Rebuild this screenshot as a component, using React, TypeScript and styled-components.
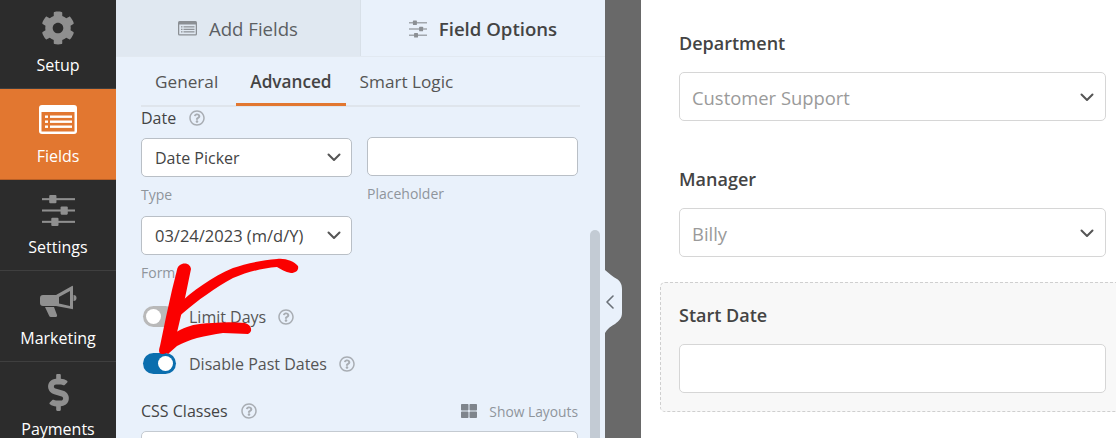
import React from 'react';
import styled, { createGlobalStyle } from 'styled-components';
import { FaCog, FaDollarSign, FaRegQuestionCircle, FaThLarge } from 'react-icons/fa';

const GlobalStyle = createGlobalStyle`
  html, body {
    margin: 0;
    padding: 0;
    background: #fff;
    overflow: hidden;
  }
  * { box-sizing: border-box; }
  body { font-family: "Open Sans", "Liberation Sans", sans-serif; }
`;

const Page = styled.div`
  position: relative;
  display: flex;
  width: 1116px;
  height: 438px;
  overflow: hidden;
`;

const Sidebar = styled.nav`
  flex: 0 0 116px;
  height: 438px;
  background: #2c2c2c;
  overflow: hidden;
`;

const SideItem = styled.div<{ $active?: boolean; $first?: boolean }>`
  height: 91px;
  margin-top: ${p => (p.$first ? '-2px' : '0')};
  display: flex;
  flex-direction: column;
  align-items: center;
  padding-top: 11px;
  background: ${p => (p.$active ? '#e27730' : 'transparent')};
  border-bottom: 1px solid ${p => (p.$active ? '#b85f26' : '#3f3f3f')};
  color: ${p => (p.$active ? '#fff' : '#8f8f8f')};
`;

const SideIcon = styled.div`
  height: 38px;
  display: flex;
  align-items: center;
  justify-content: center;
  font-size: 34px;
`;

const SideLabel = styled.span`
  margin-top: 8px;
  font-size: 16px;
  line-height: 20px;
  color: #fff;
`;

const Panel = styled.section`
  flex: 0 0 489px;
  height: 438px;
  background: #e9f1fb;
`;

const TopTabs = styled.div`
  display: flex;
  height: 57px;
  border-bottom: 1px solid #e2e9f1;
`;

const TopTab = styled.div<{ $active?: boolean }>`
  flex: 0 0 ${p => (p.$active ? '244px' : '245px')};
  display: flex;
  align-items: center;
  justify-content: center;
  gap: 12px;
  padding-top: 1px;
  font-size: 18.6px;
  font-weight: ${p => (p.$active ? 600 : 400)};
  color: ${p => (p.$active ? '#444' : '#5c5f63')};
  background: ${p => (p.$active ? '#e9f1fb' : '#e0e8f1')};
  border-right: ${p => (p.$active ? 'none' : '1px solid #d8e0e8')};
`;

const PanelBody = styled.div`
  padding: 0 25px;
`;

const SubTabs = styled.div`
  display: flex;
  height: 50px;
  border-bottom: 2px solid #dfe5ec;
`;

const SubTab = styled.div<{ $active?: boolean }>`
  height: 49px;
  padding: 2px 14px 0;
  display: flex;
  align-items: center;
  font-size: 17.2px;
  font-weight: ${p => (p.$active ? 600 : 400)};
  color: ${p => (p.$active ? '#444' : '#555')};
  border-bottom: 3px solid ${p => (p.$active ? '#e27730' : 'transparent')};
`;

const FirstSubTab = styled(SubTab)`
  padding-right: 18px;
`;

const HeadRow = styled.div`
  display: flex;
  align-items: center;
  gap: 13px;
  height: 20px;
  margin-top: 1px;
  font-size: 16px;
  color: #444;
  svg { color: #a8adb3; font-size: 16px; }
`;

const FieldRow = styled.div<{ $top: number }>`
  display: flex;
  gap: 15px;
  margin-top: ${p => p.$top}px;
`;

const FieldCol = styled.div`
  flex: 0 0 211px;
`;

const ChevronBox = styled.div`
  width: 100%;
  display: flex;
  align-items: center;
  justify-content: space-between;
  background: #fff;
  border: 1px solid #b9bfc6;
  border-radius: 5px;
`;

const PanelSelect = styled(ChevronBox)<{ $size?: number }>`
  height: 39px;
  padding: 0 10px 0 13px;
  font-size: ${p => p.$size ?? 16}px;
  color: #444;
`;

const PanelInput = styled.div`
  height: 39px;
  margin: -1px 0 1px;
  background: #fff;
  border: 1px solid #b9bfc6;
  border-radius: 5px;
`;

const Hint = styled.div`
  margin-top: 9px;
  height: 18px;
  line-height: 18px;
  font-size: 14px;
  color: #8f959b;
`;

const ToggleRow = styled.div<{ $top: number }>`
  display: flex;
  align-items: center;
  height: 21px;
  margin-top: ${p => p.$top}px;
  padding-left: 2px;
  font-size: 16px;
  color: #555;
  svg { color: #a8adb3; font-size: 16px; margin-left: 12px; }
`;

const Toggle = styled.span<{ $on?: boolean }>`
  flex: 0 0 33px;
  height: 21px;
  margin-right: 13px;
  padding: 3px;
  display: flex;
  justify-content: ${p => (p.$on ? 'flex-end' : 'flex-start')};
  border-radius: 11px;
  background: ${p => (p.$on ? '#0b6eae' : '#b9b9b9')};
  &::after {
    content: '';
    width: 15px;
    height: 15px;
    border-radius: 50%;
    background: #fff;
  }
`;

const CssRow = styled(HeadRow)`
  justify-content: space-between;
  margin-top: 27px;
  margin-right: 2px;
`;

const CssLabel = styled.div`
  display: flex;
  align-items: center;
  gap: 13px;
`;

const ShowLayouts = styled.div`
  display: flex;
  align-items: center;
  gap: 12px;
  font-size: 13.8px;
  color: #8f959b;
  svg { color: #7f858c; font-size: 16px; }
`;

const CssInput = styled.div`
  height: 40px;
  margin-top: 10px;
  margin-right: 2px;
  background: #fff;
  border: 1px solid #c4cad1;
  border-radius: 5px;
`;

const Scrollbar = styled.div`
  position: absolute;
  left: 590px;
  top: 230px;
  width: 10px;
  height: 220px;
  border-radius: 5px;
  background: #c3cbd4;
`;

const Gutter = styled.div`
  flex: 0 0 36px;
  height: 438px;
  background: #696969;
`;

const Collapse = styled.div`
  position: absolute;
  left: 605px;
  top: 270px;
  width: 17px;
  height: 63px;
  display: flex;
  align-items: center;
  padding-left: 1px;
  background: #e9f1fb;
  clip-path: path('M0 0 C4 3 8 7 12 9 C15 11 17 14 17 19 L17 43 C17 48 14 51 10 54 C6 56 2 59 0 63 Z');
`;

const Preview = styled.main`
  flex: 0 0 475px;
  min-width: 0;
  height: 438px;
  background: #fff;
  padding: 31px 10px 0 38px;
`;

const FormField = styled.div<{ $gap: number }>`
  margin-bottom: ${p => p.$gap}px;
`;

const FormLabel = styled.div`
  height: 22px;
  line-height: 24px;
  font-size: 18px;
  font-weight: 600;
  color: #444;
`;

const FormSelect = styled(ChevronBox)`
  height: 49px;
  margin-top: 19px;
  padding: 1px 11px 0 12px;
  font-size: 18.4px;
  color: #9a9a9a;
  border-color: #d6d6d6;
`;

const Highlight = styled.div`
  width: 470px;
  height: 130px;
  margin-left: -19px;
  padding: 20px 0 0 18px;
  background: #f8f8f8;
  border: 1px dashed #cfcfcf;
  border-radius: 5px;
`;

const FormInput = styled.div`
  width: 427px;
  height: 49px;
  margin-top: 19px;
  background: #fff;
  border: 1px solid #d6d6d6;
  border-radius: 5px;
`;

const ArrowOverlay = styled.svg`
  position: absolute;
  left: 0;
  top: 0;
  pointer-events: none;
`;

const Chevron = ({ color = '#555' }: { color?: string }) => (
  <svg width="14" height="9" viewBox="0 0 14 9" fill="none">
    <path d="M1.5 1.5 L7 7 L12.5 1.5" stroke={color} strokeWidth="2" strokeLinecap="round" strokeLinejoin="round" />
  </svg>
);

const SlidersIcon = ({ size, color }: { size: number; color: string }) => (
  <svg width={size} height={size} viewBox="0 0 32 32" fill={color}>
    <rect x="0" y="4" width="32" height="2" />
    <rect x="7" y="1" width="7" height="8" rx="1" />
    <rect x="0" y="15" width="32" height="2" />
    <rect x="18" y="12" width="7" height="8" rx="1" />
    <rect x="0" y="26" width="32" height="2" />
    <rect x="9" y="23" width="7" height="8" rx="1" />
  </svg>
);

const ListIcon = ({ width, color, inner }: { width: number; color: string; inner: string }) => (
  <svg width={width} height={(width * 29) / 38} viewBox="0 0 38 29">
    <rect x="0" y="0" width="38" height="29" rx="3" fill={color} />
    <rect x="2.5" y="7" width="33" height="19.5" fill={inner} />
    <g fill={color}>
      <rect x="6" y="10.5" width="3" height="2.4" />
      <rect x="11" y="10.5" width="22" height="2.4" />
      <rect x="6" y="15.5" width="3" height="2.4" />
      <rect x="11" y="15.5" width="22" height="2.4" />
      <rect x="6" y="20.5" width="3" height="2.4" />
      <rect x="11" y="20.5" width="22" height="2.4" />
    </g>
  </svg>
);

const MegaphoneIcon = () => (
  <svg width="37" height="32" viewBox="0 0 37 32" fill="#8f8f8f" fillRule="evenodd">
    <path d="M3 10 H16 L32 1 Q33 0 33 2 V23 Q33 25 32 24 L16 21 H3 Q0 21 0 18 V13 Q0 10 3 10 Z M19 12 V18.5 L30 21 V6 Z" />
    <path d="M33.5 10 a3 3 0 0 1 0 6 Z" />
    <path d="M5 22 H14 L17 30 Q17.5 32 15 32 H11 Q9.5 32 9 30.5 Z" />
  </svg>
);

const Help = () => <FaRegQuestionCircle />;

export default function App() {
  return (
    <>
      <GlobalStyle />
      <Page>
        <Sidebar>
          <SideItem $first>
            <SideIcon><FaCog /></SideIcon>
            <SideLabel>Setup</SideLabel>
          </SideItem>
          <SideItem $active>
            <SideIcon><ListIcon width={38} color="#fff" inner="#e27730" /></SideIcon>
            <SideLabel>Fields</SideLabel>
          </SideItem>
          <SideItem>
            <SideIcon><SlidersIcon size={33} color="#8f8f8f" /></SideIcon>
            <SideLabel>Settings</SideLabel>
          </SideItem>
          <SideItem>
            <SideIcon><MegaphoneIcon /></SideIcon>
            <SideLabel>Marketing</SideLabel>
          </SideItem>
          <SideItem>
            <SideIcon><FaDollarSign size={37} /></SideIcon>
            <SideLabel>Payments</SideLabel>
          </SideItem>
        </Sidebar>

        <Panel>
          <TopTabs>
            <TopTab>
              <ListIcon width={19} color="#8b8f94" inner="#e0e8f1" />
              Add Fields
            </TopTab>
            <TopTab $active>
              <SlidersIcon size={18} color="#8b8f94" />
              Field Options
            </TopTab>
          </TopTabs>
          <PanelBody>
            <SubTabs>
              <FirstSubTab>General</FirstSubTab>
              <SubTab $active>Advanced</SubTab>
              <SubTab>Smart Logic</SubTab>
            </SubTabs>
            <HeadRow>
              Date <Help />
            </HeadRow>
            <FieldRow $top={10}>
              <FieldCol>
                <PanelSelect>
                  Date Picker
                  <Chevron />
                </PanelSelect>
                <Hint>Type</Hint>
              </FieldCol>
              <FieldCol>
                <PanelInput />
                <Hint>Placeholder</Hint>
              </FieldCol>
            </FieldRow>
            <FieldRow $top={12}>
              <FieldCol>
                <PanelSelect $size={16.5}>
                  03/24/2023 (m/d/Y)
                  <Chevron />
                </PanelSelect>
                <Hint>Format</Hint>
              </FieldCol>
            </FieldRow>
            <ToggleRow $top={24}>
              <Toggle />
              Limit Days <Help />
            </ToggleRow>
            <ToggleRow $top={26}>
              <Toggle $on />
              Disable Past Dates <Help />
            </ToggleRow>
            <CssRow>
              <CssLabel>
                CSS Classes <Help />
              </CssLabel>
              <ShowLayouts>
                <FaThLarge />
                Show Layouts
              </ShowLayouts>
            </CssRow>
            <CssInput />
          </PanelBody>
        </Panel>
        <Scrollbar />
        <Collapse>
          <svg width="8" height="14" viewBox="0 0 8 14" fill="none">
            <path d="M7 1 L1 7 L7 13" stroke="#6b7178" strokeWidth="1.6" strokeLinecap="round" strokeLinejoin="round" />
          </svg>
        </Collapse>

        <Gutter />

        <Preview>
          <FormField $gap={46}>
            <FormLabel>Department</FormLabel>
            <FormSelect>
              Customer Support
              <Chevron />
            </FormSelect>
          </FormField>
          <FormField $gap={25}>
            <FormLabel>Manager</FormLabel>
            <FormSelect>
              Billy
              <Chevron />
            </FormSelect>
          </FormField>
          <Highlight>
            <FormLabel>Start Date</FormLabel>
            <FormInput />
          </Highlight>
        </Preview>

        <ArrowOverlay width="1116" height="438" viewBox="0 0 1116 438">
          <path
            d="M177 270 C178 262 190 261 191 269 L185 298 L179 324 L174 345 C171 352 166 354 162 354 C158 354 159 349 160 346 L166 317 L172 290 Z"
            fill="#fb0000"
          />
          <path
            d="M298 266 C294 261 285 258 277 259 C262 260 245 264 233 268 C212 277 192 291 178 305 L176 319 L183 313 C198 300 215 288 233 278 C248 272 262 268 277 267 C281 269 285 272 291 273 C296 273 299 270 298 266 Z"
            fill="#fb0000"
          />
          <path
            d="M162 348 C170 335 178 330 187 327 C195 324 204 323 213 323 C224 322 234 322 245 323 C252 325 253 332 248 334 C240 334 232 333 223 333 C214 334 206 336 197 338 C189 340 183 343 177 346 L168 354 Z"
            fill="#fb0000"
          />
        </ArrowOverlay>
      </Page>
    </>
  );
}
